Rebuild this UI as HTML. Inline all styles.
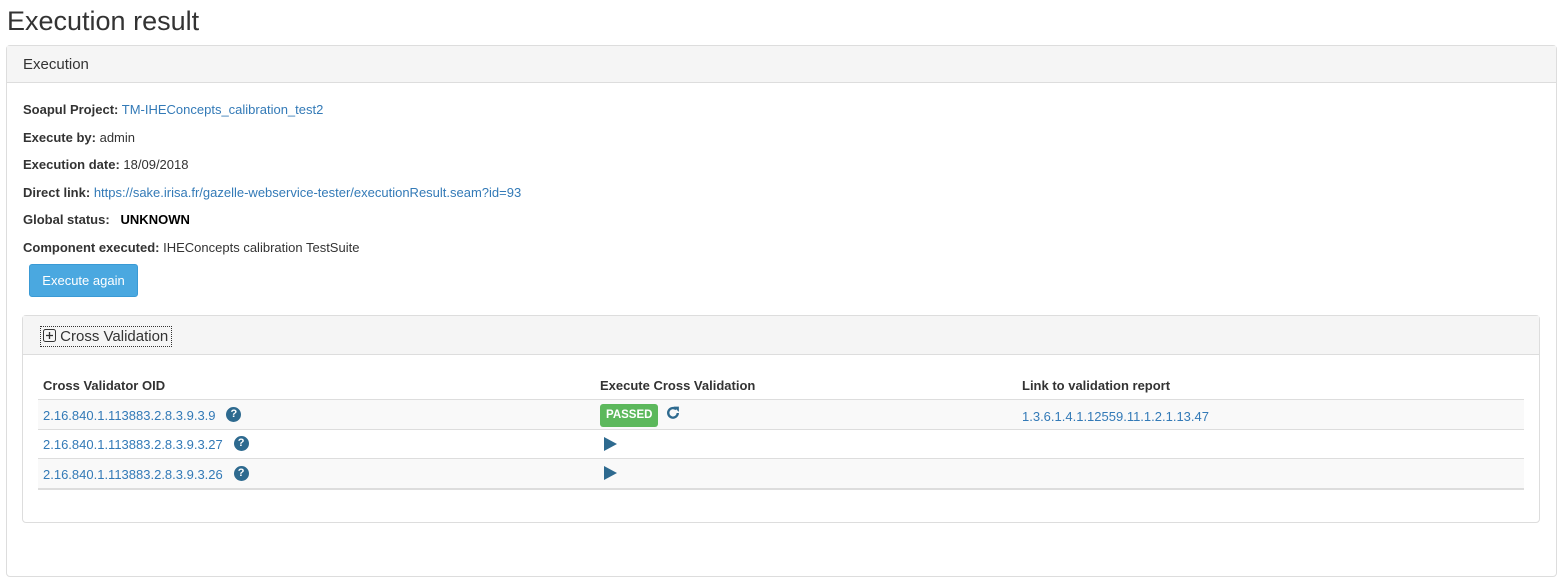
<!DOCTYPE html>
<html><head><style>
body{margin:0;font-family:"Liberation Sans",sans-serif;font-size:13px;color:#333;background:#fff;width:1560px;height:539px;overflow:hidden;position:relative}
h1{position:absolute;left:7px;top:6px;margin:0;font-weight:400;font-size:27px;color:#333}
.p1{position:absolute;left:6px;top:45px;width:1549px;height:530px;border:1px solid #ddd;border-radius:4px}
.h1{height:36px;background:#f5f5f5;border-bottom:1px solid #ddd;padding-left:16px;line-height:38px;font-size:15px}
.l{position:absolute;left:16px}
b{font-weight:700}
a{color:#337ab7;text-decoration:none}
.btn{position:absolute;left:22px;top:218px;width:107px;height:31px;background:#4aa8e0;border:1px solid #3a9ad5;border-radius:3px;color:#fff;font-size:13px;text-align:center;line-height:31px}
.p2{position:absolute;left:15px;top:269px;width:1516px;height:206px;border:1px solid #ddd;border-radius:4px}
.h2{height:38px;background:#f5f5f5;border-bottom:1px solid #ddd;position:relative}
.cv{position:absolute;left:17px;top:10px;border:1px dotted #333;height:19px;padding:0 0 0 2px;font-size:15px;line-height:19px;width:128px}
.row{position:absolute;left:15px;width:1486px}
.q{display:inline-block;width:15px;height:15px;border-radius:50%;background:#2e6a8f;color:#fff;font-weight:700;font-size:11px;text-align:center;line-height:15px;vertical-align:top;margin-top:-1px}
</style></head><body>
<h1>Execution result</h1>
<div class="p1">
<div class="h1">Execution</div>
<div class="l" style="top:56px"><b>Soapul Project:</b> <a>TM-IHEConcepts_calibration_test2</a></div>
<div class="l" style="top:84px"><b>Execute by:</b> admin</div>
<div class="l" style="top:111px"><b>Execution date:</b> 18/09/2018</div>
<div class="l" style="top:139px"><b>Direct link:</b> <a>https://sake.irisa.fr/gazelle-webservice-tester/executionResult.seam?id=93</a></div>
<div class="l" style="top:166px"><b>Global status:</b> &nbsp;&nbsp;<b style="color:#000">UNKNOWN</b></div>
<div class="l" style="top:194px"><b>Component executed:</b> IHEConcepts calibration TestSuite</div>
<div class="btn">Execute again</div>
<div class="p2">
<div class="h2"><div class="cv"><svg width="13" height="13" style="vertical-align:-1px"><rect x="0.5" y="0.5" width="12" height="12" rx="2" fill="none" stroke="#333"/><path d="M6.5 3v7M3 6.5h7" stroke="#333" stroke-width="1.3"/></svg> Cross Validation</div></div>
<div class="row" style="top:62px;height:21px;border-bottom:2px solid #ddd;font-weight:700">
<span style="position:absolute;left:5px">Cross Validator OID</span><span style="position:absolute;left:562px">Execute Cross Validation</span><span style="position:absolute;left:984px">Link to validation report</span></div>
<div class="row" style="top:84px;height:29px;background:#f9f9f9;border-bottom:1px solid #ddd">
<span style="position:absolute;left:5px;top:8px"><a>2.16.840.1.113883.2.8.3.9.3.9</a> &nbsp;&nbsp;<span class="q">?</span></span>
<span style="position:absolute;left:562px;top:4px;background:#5cb85c;color:#fff;font-weight:700;font-size:11.5px;padding:0 6px;height:23px;line-height:23px;border-radius:3px">PASSED</span>
<svg style="position:absolute;left:627px;top:5px" width="16" height="16" viewBox="0 0 15 15"><path d="M12 7.5A4.5 4.5 0 1 1 10.5 4" fill="none" stroke="#2e6a8f" stroke-width="2.2"/><path d="M8 1.5h5v5z" fill="#2e6a8f"/></svg>
<a style="position:absolute;left:984px;top:9px">1.3.6.1.4.1.12559.11.1.2.1.13.47</a></div>
<div class="row" style="top:114px;height:28px;border-bottom:1px solid #ddd">
<span style="position:absolute;left:5px;top:7px"><a>2.16.840.1.113883.2.8.3.9.3.27</a> &nbsp;&nbsp;<span class="q">?</span></span>
<svg style="position:absolute;left:566px;top:7px" width="13" height="14"><path d="M0 0L13 7L0 14z" fill="#2e6a8f"/></svg></div>
<div class="row" style="top:143px;height:29px;background:#f9f9f9;border-bottom:2px solid #ddd">
<span style="position:absolute;left:5px;top:8px"><a>2.16.840.1.113883.2.8.3.9.3.26</a> &nbsp;&nbsp;<span class="q">?</span></span>
<svg style="position:absolute;left:566px;top:7px" width="13" height="14"><path d="M0 0L13 7L0 14z" fill="#2e6a8f"/></svg></div>
</div>
</div>
</body></html>
